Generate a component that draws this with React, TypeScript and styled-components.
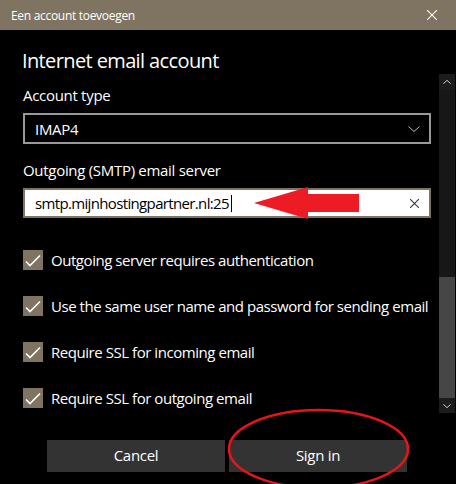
import React from "react";
import styled, { createGlobalStyle } from "styled-components";

const GlobalStyle = createGlobalStyle`
  html, body { margin: 0; padding: 0; background: #000; }
  body { width: 456px; height: 484px; overflow: hidden; }
  * { box-sizing: border-box; }
`;

const FONT = `"Segoe UI", "Open Sans", "Noto Sans", sans-serif`;

const Window = styled.div`
  position: relative;
  width: 456px;
  height: 484px;
  background: #000;
  display: flex;
  flex-direction: column;
  font-family: ${FONT};
  color: #fff;
  overflow: hidden;
`;

const TitleBar = styled.div`
  height: 30px;
  flex: none;
  background: #7f7461;
  display: flex;
  align-items: center;
  justify-content: space-between;
  padding-left: 11px;
  font-size: 12px;
  letter-spacing: -0.3px;
  color: #fff;
`;

const CloseButton = styled.div`
  width: 46px;
  height: 30px;
  display: flex;
  align-items: center;
  justify-content: center;
  margin-right: 1px;
`;

const Heading = styled.h1`
  margin: 0;
  flex: none;
  height: 44px;
  padding: 17px 0 0 22px;
  font-size: 20px;
  line-height: 28px;
  font-weight: 400;
  letter-spacing: -0.62px;
`;

const ScrollRegion = styled.div`
  flex: none;
  height: 339px;
  display: flex;
`;

const ScrollContent = styled.div`
  flex: 1;
  padding: 11px 0 0 23px;
  display: flex;
  flex-direction: column;
`;

const Label = styled.div<{ $top?: number }>`
  font-size: 15px;
  line-height: 20px;
  letter-spacing: -0.3px;
  margin-top: ${(p) => p.$top ?? 0}px;
  margin-bottom: 8px;
`;

const Select = styled.div`
  width: 408px;
  height: 31px;
  border: 2px solid #999;
  display: flex;
  align-items: center;
  justify-content: space-between;
  padding: 0 9px 0 10px;
  font-size: 15px;
  letter-spacing: -0.3px;
`;

const Input = styled.div`
  width: 408px;
  height: 30px;
  border: 2px solid #7f7461;
  background: #fff;
  color: #000;
  display: flex;
  align-items: center;
  justify-content: space-between;
  padding: 0 10px 0 10px;
  font-size: 15px;
  letter-spacing: -0.65px;
`;

const InputText = styled.span`
  display: flex;
  align-items: center;
`;

const Caret = styled.span`
  display: inline-block;
  width: 1px;
  height: 17px;
  background: #000;
  margin-left: 2px;
`;

const CheckList = styled.div`
  margin-top: 32px;
  display: flex;
  flex-direction: column;
  gap: 26px;
`;

const CheckRow = styled.div`
  display: flex;
  align-items: center;
  gap: 8px;
  height: 20px;
  font-size: 15px;
  letter-spacing: -0.45px;
  white-space: nowrap;
`;

const Box = styled.span`
  width: 20px;
  height: 20px;
  flex: none;
  background: #7f7461;
  display: flex;
`;

const ScrollBar = styled.div`
  width: 16px;
  flex: none;
  background: #171717;
  display: flex;
  flex-direction: column;
  margin-right: 1px;
`;

const ScrollArrow = styled.div<{ $h: number }>`
  height: ${(p) => p.$h}px;
  flex: none;
  background: #1c1c1c;
  display: flex;
  align-items: center;
  justify-content: center;
`;

const Track = styled.div`
  flex: 1;
  display: flex;
  flex-direction: column;
  justify-content: flex-end;
`;

const Thumb = styled.div`
  height: 121px;
  background: #464646;
`;

const Footer = styled.div`
  flex: 1;
  display: flex;
  gap: 4px;
  padding: 27px 0 0 47px;
`;

const Button = styled.button`
  width: 178px;
  height: 32px;
  border: none;
  background: #333;
  color: #fff;
  font-family: ${FONT};
  font-size: 15px;
  letter-spacing: -0.3px;
  padding: 0 0 2px;
`;

const Annotations = styled.svg`
  position: absolute;
  left: 0;
  top: 0;
  pointer-events: none;
`;

const Check = () => (
  <svg width="20" height="20" viewBox="0 0 20 20">
    <polyline points="3,11.5 7,15.5 17,5.5" fill="none" stroke="#fff" strokeWidth="1.6" />
  </svg>
);

const Chevron = ({ up, size, color }: { up?: boolean; size: number; color: string }) => (
  <svg width={size} height={size / 2} viewBox="0 0 12 6">
    <polyline
      points={up ? "0.5,5.5 6,0.5 11.5,5.5" : "0.5,0.5 6,5.5 11.5,0.5"}
      fill="none"
      stroke={color}
      strokeWidth={12 / size}
    />
  </svg>
);

const Cross = ({ size, color }: { size: number; color: string }) => (
  <svg width={size} height={size} viewBox={`0 0 ${size} ${size}`}>
    <line x1="0" y1="0" x2={size} y2={size} stroke={color} strokeWidth="1.1" />
    <line x1={size} y1="0" x2="0" y2={size} stroke={color} strokeWidth="1.1" />
  </svg>
);

const options = [
  "Outgoing server requires authentication",
  "Use the same user name and password for sending email",
  "Require SSL for incoming email",
  "Require SSL for outgoing email",
];

export default function App() {
  return (
    <>
      <GlobalStyle />
      <Window>
        <TitleBar>
          <span>Een account toevoegen</span>
          <CloseButton>
            <Cross size={10} color="#fff" />
          </CloseButton>
        </TitleBar>
        <Heading>Internet email account</Heading>
        <ScrollRegion>
          <ScrollContent>
            <Label>Account type</Label>
            <Select>
              <span>IMAP4</span>
              <Chevron size={12} color="#bbb" />
            </Select>
            <Label $top={16}>Outgoing (SMTP) email server</Label>
            <Input>
              <InputText>
                smtp.mijnhostingpartner.nl:25
                <Caret />
              </InputText>
              <Cross size={9} color="#333" />
            </Input>
            <CheckList>
              {options.map((o) => (
                <CheckRow key={o}>
                  <Box>
                    <Check />
                  </Box>
                  {o}
                </CheckRow>
              ))}
            </CheckList>
          </ScrollContent>
          <ScrollBar>
            <ScrollArrow $h={16}>
              <Chevron up size={8} color="#ccc" />
            </ScrollArrow>
            <Track>
              <Thumb />
            </Track>
            <ScrollArrow $h={15}>
              <Chevron size={8} color="#ccc" />
            </ScrollArrow>
          </ScrollBar>
        </ScrollRegion>
        <Footer>
          <Button>Cancel</Button>
          <Button>Sign in</Button>
        </Footer>
        <Annotations width="456" height="484" viewBox="0 0 456 484">
          <polygon
            points="254,203 308,187 308,194 359,194 359,212 308,212 308,219"
            fill="#ed1c24"
          />
          <ellipse cx="318.5" cy="449" rx="89.5" ry="39" fill="none" stroke="#e8141c" strokeWidth="2.5" />
        </Annotations>
      </Window>
    </>
  );
}
